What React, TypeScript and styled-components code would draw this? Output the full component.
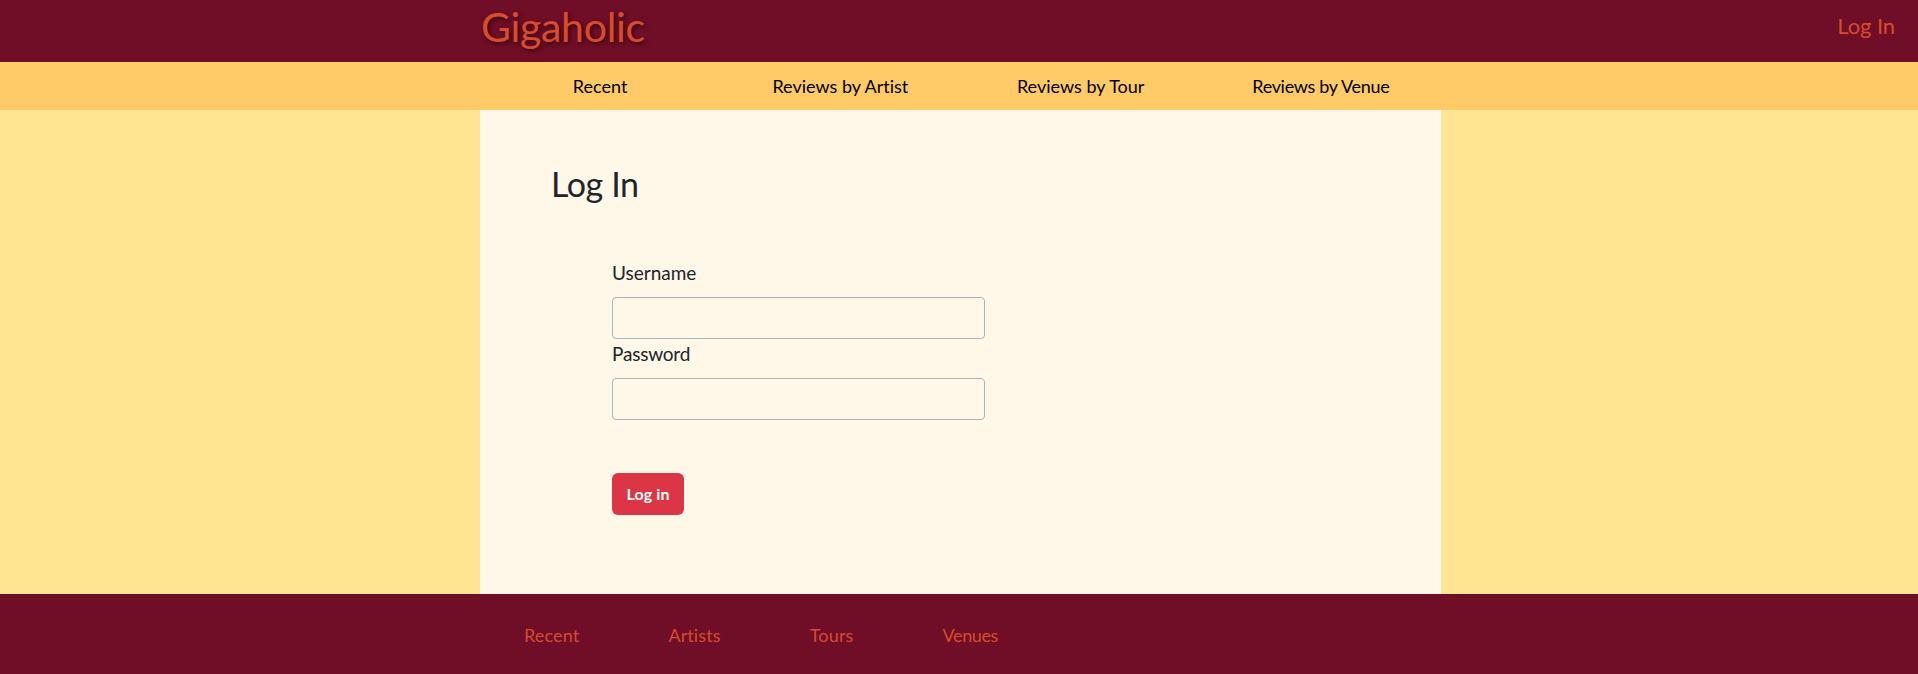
import React from "react";
import styled, { createGlobalStyle } from "styled-components";

const GlobalStyle = createGlobalStyle`
  *, *::before, *::after { box-sizing: border-box; }
  body {
    margin: 0;
    background: #ffe492;
    color: #212529;
    font-family: "Gill Sans", "Gill Sans MT", Lato, sans-serif;
    font-size: 18px;
    font-variant-ligatures: none;
    line-height: 1.5;
  }
`;

const Page = styled.div`
  min-height: 100vh;
  display: flex;
  flex-direction: column;
`;

const Header = styled.header`
  height: 62px;
  padding: 0 23px 0 481px;
  display: flex;
  justify-content: space-between;
  background: #6f0e26;
`;

const Brand = styled.a`
  color: #d64c2d;
  font-size: 41px;
  line-height: 54px;
  letter-spacing: -0.3px;
  text-decoration: none;
  text-shadow: 2px 2px 4px rgba(0, 0, 0, 0.5);
`;

const AccountLink = styled.a`
  color: #d64c2d;
  font-size: 22px;
  line-height: 52px;
  letter-spacing: -0.1px;
  text-decoration: none;
`;

const Nav = styled.nav`
  height: 48px;
  padding-left: 480px;
  display: flex;
  background: #ffcb69;
`;

const NavList = styled.div`
  width: 961px;
  display: grid;
  grid-template-columns: repeat(4, 1fr);
`;

const NavLink = styled.a<{ $tracking?: string }>`
  color: #000;
  font-size: 18px;
  line-height: 49px;
  letter-spacing: ${({ $tracking }) => $tracking ?? "normal"};
  text-align: center;
  text-decoration: none;
`;

const Main = styled.main`
  width: 961px;
  height: 484px;
  margin-left: 480px;
  padding: 50px 72px 0;
  background: #fff7e8;
`;

const Title = styled.h1`
  margin: 0 0 0 -1px;
  font-size: 34px;
  font-weight: 400;
  line-height: 48px;
  letter-spacing: -0.4px;
`;

const Form = styled.form`
  width: 373px;
  margin: 50px 0 0 60px;
`;

const Label = styled.label<{ $tracking?: string }>`
  display: block;
  height: 39px;
  font-size: 19px;
  line-height: 30px;
  letter-spacing: ${({ $tracking }) => $tracking ?? "normal"};
`;

const Input = styled.input`
  display: block;
  width: 100%;
  height: 42px;
  padding: 6px 12px;
  border: 1px solid #a9b4c0;
  border-radius: 4px;
  background: transparent;
  font: inherit;
`;

const Submit = styled.button`
  width: 72px;
  height: 42px;
  margin-top: 53px;
  padding: 0;
  border: 0;
  border-radius: 6px;
  background: #dc3545;
  color: #fff;
  font: inherit;
  font-size: 16px;
  font-weight: 700;
  letter-spacing: 0.1px;
`;

const Footer = styled.footer`
  height: 80px;
  padding-left: 524px;
  display: flex;
  gap: 89px;
  background: #6f0e26;
`;

const FooterLink = styled.a<{ $tracking?: string }>`
  color: #d64c2d;
  font-size: 18px;
  line-height: 83px;
  letter-spacing: ${({ $tracking }) => $tracking ?? "normal"};
  text-decoration: none;
`;

const sections = [
  { name: "Recent" },
  { name: "Reviews by Artist" },
  { name: "Reviews by Tour" },
  { name: "Reviews by Venue", tracking: "-0.3px" },
];

const footerLinks = [
  { name: "Recent", tracking: "0.15px" },
  { name: "Artists", tracking: "0.1px" },
  { name: "Tours", tracking: "0.2px" },
  { name: "Venues", tracking: "-0.4px" },
];

export default function App() {
  return (
    <Page>
      <GlobalStyle />
      <Header>
        <Brand>Gigaholic</Brand>
        <AccountLink>Log In</AccountLink>
      </Header>
      <Nav>
        <NavList>
          {sections.map(({ name, tracking }) => (
            <NavLink key={name} $tracking={tracking}>{name}</NavLink>
          ))}
        </NavList>
      </Nav>
      <Main>
        <Title>Log In</Title>
        <Form>
          <Label htmlFor="username">Username</Label>
          <Input id="username" type="text" />
          <Label htmlFor="password" $tracking="-0.2px">Password</Label>
          <Input id="password" type="password" />
          <Submit type="button">Log in</Submit>
        </Form>
      </Main>
      <Footer>
        {footerLinks.map(({ name, tracking }) => (
          <FooterLink key={name} $tracking={tracking}>{name}</FooterLink>
        ))}
      </Footer>
    </Page>
  );
}
